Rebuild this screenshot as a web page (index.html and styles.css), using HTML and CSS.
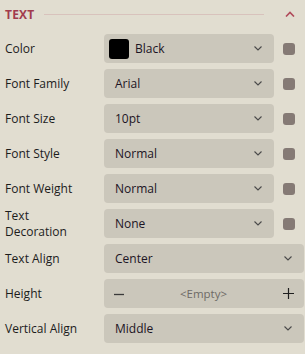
FILE: index.html
```html
<!DOCTYPE html>
<html>
<head>
<meta charset="utf-8">
<link rel="stylesheet" href="styles.css">
</head>
<body>
<div class="panel">
  <div class="header">
    <span class="title">TEXT</span>
    <span class="rule"></span>
    <svg class="collapse" width="10" height="6" viewBox="0 0 10 6"><path d="M1 5.5 L5 1.5 L9 5.5" fill="none" stroke="#b04a5a" stroke-width="1.6"/></svg>
  </div>

  <div class="row">
    <div class="label">Color</div>
    <div class="select"><span class="swatch"></span><span class="value">Black</span><svg class="chev" width="8" height="5" viewBox="0 0 8 5"><path d="M0.5 0.5 L4 4 L7.5 0.5" fill="none" stroke="#4a4a4a" stroke-width="1.1"/></svg></div>
    <span class="dot"></span>
  </div>
  <div class="row">
    <div class="label">Font Family</div>
    <div class="select"><span class="value">Arial</span><svg class="chev" width="8" height="5" viewBox="0 0 8 5"><path d="M0.5 0.5 L4 4 L7.5 0.5" fill="none" stroke="#4a4a4a" stroke-width="1.1"/></svg></div>
    <span class="dot"></span>
  </div>
  <div class="row">
    <div class="label">Font Size</div>
    <div class="select"><span class="value">10pt</span><svg class="chev" width="8" height="5" viewBox="0 0 8 5"><path d="M0.5 0.5 L4 4 L7.5 0.5" fill="none" stroke="#4a4a4a" stroke-width="1.1"/></svg></div>
    <span class="dot"></span>
  </div>
  <div class="row">
    <div class="label">Font Style</div>
    <div class="select"><span class="value">Normal</span><svg class="chev" width="8" height="5" viewBox="0 0 8 5"><path d="M0.5 0.5 L4 4 L7.5 0.5" fill="none" stroke="#4a4a4a" stroke-width="1.1"/></svg></div>
    <span class="dot"></span>
  </div>
  <div class="row">
    <div class="label">Font Weight</div>
    <div class="select"><span class="value">Normal</span><svg class="chev" width="8" height="5" viewBox="0 0 8 5"><path d="M0.5 0.5 L4 4 L7.5 0.5" fill="none" stroke="#4a4a4a" stroke-width="1.1"/></svg></div>
    <span class="dot"></span>
  </div>
  <div class="row">
    <div class="label two">Text<br>Decoration</div>
    <div class="select"><span class="value">None</span><svg class="chev" width="8" height="5" viewBox="0 0 8 5"><path d="M0.5 0.5 L4 4 L7.5 0.5" fill="none" stroke="#4a4a4a" stroke-width="1.1"/></svg></div>
    <span class="dot"></span>
  </div>
  <div class="row">
    <div class="label">Text Align</div>
    <div class="select full"><span class="value">Center</span><svg class="chev" width="8" height="5" viewBox="0 0 8 5"><path d="M0.5 0.5 L4 4 L7.5 0.5" fill="none" stroke="#4a4a4a" stroke-width="1.1"/></svg></div>
  </div>
  <div class="row">
    <div class="label">Height</div>
    <div class="select full spinner">
      <svg class="minus" width="10" height="10" viewBox="0 0 10 10"><path d="M0 5.5 H10" stroke="#3a3a3a" stroke-width="1.3"/></svg>
      <span class="empty">&lt;Empty&gt;</span>
      <svg class="plus" width="11" height="11" viewBox="0 0 11 11"><path d="M0 5.5 H11 M5.5 0 V11" stroke="#1e1e1e" stroke-width="1.2"/></svg>
    </div>
  </div>
  <div class="row">
    <div class="label">Vertical Align</div>
    <div class="select full"><span class="value">Middle</span><svg class="chev" width="8" height="5" viewBox="0 0 8 5"><path d="M0.5 0.5 L4 4 L7.5 0.5" fill="none" stroke="#4a4a4a" stroke-width="1.1"/></svg></div>
  </div>
</div>
</body>
</html>
```

FILE: styles.css
```css
html, body {
  margin: 0;
  padding: 0;
  background: #e1ddd0;
}
body {
  font-family: "Open Sans", "Noto Sans", sans-serif;
  font-size: 12px;
  color: #1c1c1c;
}
.panel {
  padding: 0 1px 0 5px;
  display: flex;
  flex-direction: column;
  gap: 6px;
}
.header {
  height: 28px;
  display: flex;
  align-items: center;
}
.title {
  font-weight: 700;
  font-size: 12px;
  color: #a23b4d;
  letter-spacing: 0.2px;
}
.rule {
  height: 1px;
  background: #d8c2bc;
  margin-left: 10px;
  width: 220px;
}
.collapse {
  margin-left: 21px;
}
.row {
  height: 29px;
  display: flex;
  align-items: center;
}
.label {
  width: 99px;
  flex: none;
  line-height: 16px;
}
.select {
  width: 170px;
  height: 29px;
  box-sizing: border-box;
  background: #cbc7bb;
  border-radius: 4px;
  display: flex;
  align-items: center;
  padding: 0 12px 0 11px;
}
.select.full {
  width: 200px;
}
.value {
  flex: 1;
  color: #1c1424;
}
.swatch {
  width: 20px;
  height: 20px;
  border-radius: 3px;
  background: #000;
  margin-left: -6px;
  margin-right: 6px;
}
.chev {
  flex: none;
}
.dot {
  width: 12px;
  height: 12px;
  border-radius: 3px;
  background: #857a75;
  margin-left: 9px;
}
.spinner {
  padding: 0 10px 0 10px;
}
.empty {
  flex: 1;
  text-align: center;
  color: #6e6a66;
  font-size: 11.5px;
}
```
